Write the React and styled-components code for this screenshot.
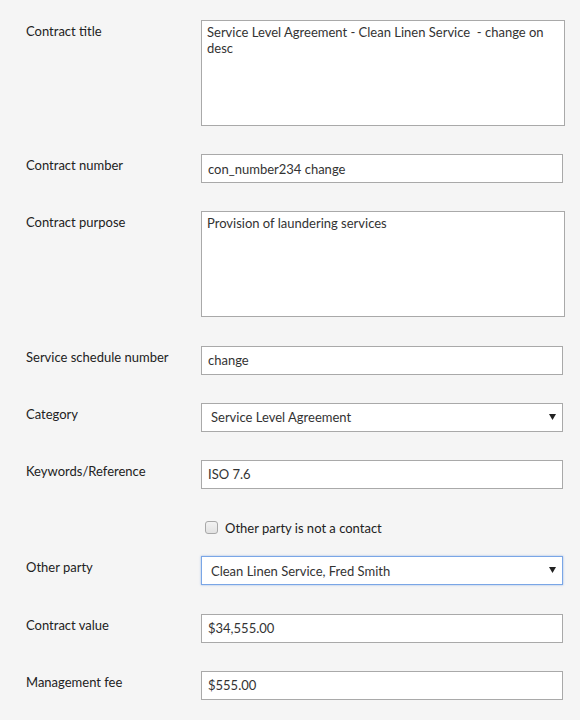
import React from 'react'
import styled, { createGlobalStyle } from 'styled-components'

const GlobalStyle = createGlobalStyle`
  html, body {
    margin: 0;
    padding: 0;
    background: #f5f5f5;
  }
  body {
    font-family: Lato, "Open Sans", "Liberation Sans", sans-serif;
  }
`

const Form = styled.form`
  display: grid;
  grid-template-columns: 175px 362px;
  align-items: start;
  row-gap: 28px;
  padding: 20px 0 20px 26px;
  background: #f5f5f5;
  min-height: 720px;
  box-sizing: border-box;
`

const Label = styled.label`
  font-size: 13px;
  line-height: 18px;
  color: #222;
  padding-top: 2px;
`

const Input = styled.input`
  display: block;
  box-sizing: border-box;
  width: 362px;
  height: 29px;
  margin: 0;
  padding: 0 6px;
  border: 1px solid #a9a9a9;
  border-radius: 0;
  background: #fff;
  font-family: inherit;
  font-size: 13px;
  color: #333;
  outline: none;
`

const TextArea = styled.textarea`
  display: block;
  box-sizing: border-box;
  width: 364px;
  height: 106px;
  margin: 0;
  padding: 3px 5px;
  border: 1px solid #a9a9a9;
  background: #fff;
  font-family: inherit;
  font-size: 13px;
  line-height: 16px;
  color: #333;
  resize: none;
  outline: none;
`

const SelectWrap = styled.div`
  position: relative;
  width: 362px;
  height: 29px;
`

const Select = styled.select`
  display: block;
  box-sizing: border-box;
  width: 100%;
  height: 100%;
  margin: 0;
  padding: 0 24px 0 9px;
  appearance: none;
  border: 1px solid ${p => (p.$focused ? '#7aa6e6' : '#a9a9a9')};
  box-shadow: ${p => (p.$focused ? '0 0 2px rgba(90, 140, 220, 0.6)' : 'none')};
  border-radius: 0;
  background: #fff;
  font-family: inherit;
  font-size: 13px;
  color: #333;
  outline: none;
`

const Arrow = styled.svg`
  position: absolute;
  right: 7px;
  top: 11px;
  pointer-events: none;
`

const Spacer = styled.div``

const CheckRow = styled.label`
  display: flex;
  align-items: center;
  gap: 7px;
  height: 11px;
  margin: 5px 0 -5px;
  padding-left: 4px;
  font-size: 13px;
  color: #222;
`

const Box = styled.span`
  display: inline-block;
  width: 11px;
  height: 11px;
  border: 1px solid #a8a8a8;
  border-radius: 3px;
  background: linear-gradient(#f2f2f2, #e2e2e2);
`

const DropSelect = ({ value, focused }) => (
  <SelectWrap>
    <Select $focused={focused} defaultValue={value}>
      <option>{value}</option>
    </Select>
    <Arrow width="7" height="6" viewBox="0 0 7 6">
      <path d="M0 0 H7 L3.5 6 Z" fill="#222" />
    </Arrow>
  </SelectWrap>
)

export default function App() {
  return (
    <>
      <GlobalStyle />
      <Form>
        <Label>Contract title</Label>
        <TextArea defaultValue="Service Level Agreement - Clean Linen Service  - change on desc" />

        <Label>Contract number</Label>
        <Input defaultValue="con_number234 change" />

        <Label>Contract purpose</Label>
        <TextArea defaultValue="Provision of laundering services" />

        <Label>Service schedule number</Label>
        <Input defaultValue="change" />

        <Label>Category</Label>
        <DropSelect value="Service Level Agreement" />

        <Label>Keywords/Reference</Label>
        <Input defaultValue="ISO 7.6" />

        <Spacer />
        <CheckRow>
          <Box />
          Other party is not a contact
        </CheckRow>

        <Label>Other party</Label>
        <DropSelect value="Clean Linen Service, Fred Smith" focused />

        <Label>Contract value</Label>
        <Input defaultValue="$34,555.00" />

        <Label>Management fee</Label>
        <Input defaultValue="$555.00" />
      </Form>
    </>
  )
}
